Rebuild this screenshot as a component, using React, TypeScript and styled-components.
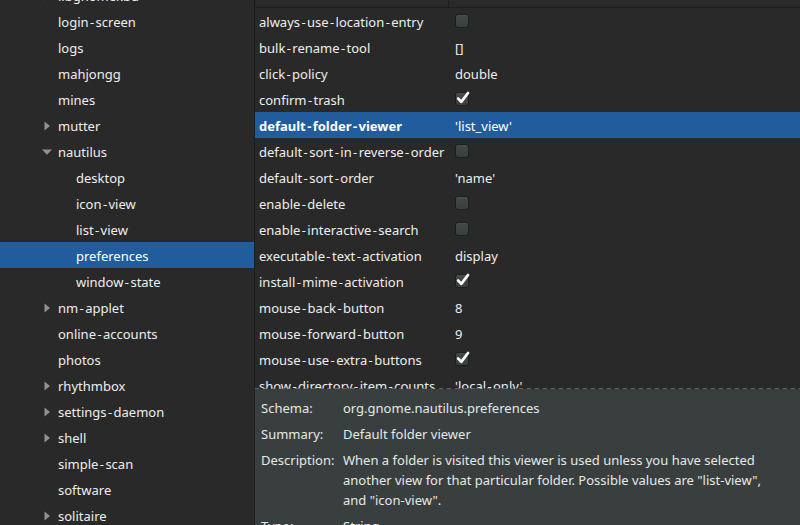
import React from "react";
import styled, { createGlobalStyle } from "styled-components";

const Global = createGlobalStyle`
  html, body { margin: 0; padding: 0; background: #292929; overflow: hidden; }
  body { font-family: "Noto Sans", "Open Sans", sans-serif; font-size: 13px; color: #eeeeec; }
`;

const Window = styled.div`
  display: flex;
  width: 800px;
  height: 525px;
  overflow: hidden;
  background: #292929;
`;

const Sidebar = styled.div`
  width: 254px;
  flex: none;
  border-right: 1px solid #1c1f1f;
  overflow: hidden;
`;

const SideScroll = styled.div`
  display: flex;
  flex-direction: column;
  margin-top: -18px;
`;

const SideRow = styled.div<{ $level: number; $selected?: boolean }>`
  display: flex;
  align-items: center;
  box-sizing: border-box;
  height: 26px;
  padding-top: 2px;
  padding-left: ${(p) => 40 + p.$level * 18}px;
  background: ${(p) => (p.$selected ? "#215d9c" : "transparent")};
  color: ${(p) => (p.$selected ? "#ffffff" : "#eeeeec")};
  white-space: nowrap;
`;

const Expander = styled.span`
  display: inline-flex;
  align-items: center;
  justify-content: center;
  width: 14px;
  height: 22px;
  margin-right: 4px;
  margin-top: -1px;
`;

const Main = styled.div`
  flex: 1;
  display: flex;
  flex-direction: column;
  min-width: 0;
`;

const ListArea = styled.div`
  position: relative;
  height: 389px;
  flex: none;
  overflow: hidden;
  &::after {
    content: "";
    position: absolute;
    left: 0;
    right: 0;
    bottom: 0;
    height: 1px;
    background: repeating-linear-gradient(90deg, #8a8a8a 0 4px, #292929 4px 8px);
    opacity: 0.6;
  }
`;

const Header = styled.div`
  display: grid;
  grid-template-columns: 194px 1fr;
  height: 7px;
  border-bottom: 1px solid #1c1f1f;
`;

const HeaderCell = styled.div<{ $divider?: boolean }>`
  border-right: ${(p) => (p.$divider ? "1px solid #1c1f1f" : "none")};
`;

const KeyRow = styled.div<{ $selected?: boolean }>`
  display: grid;
  grid-template-columns: 194px 1fr;
  align-items: center;
  box-sizing: border-box;
  height: 26px;
  padding-top: 2px;
  background: ${(p) => (p.$selected ? "#215d9c" : "transparent")};
  color: ${(p) => (p.$selected ? "#ffffff" : "#eeeeec")};
`;

const KeyName = styled.div<{ $bold?: boolean }>`
  padding-left: 4px;
  white-space: nowrap;
  overflow: hidden;
  font-weight: ${(p) => (p.$bold ? 700 : 400)};
`;

const KeyValue = styled.div`
  padding-left: 6px;
  white-space: nowrap;
  display: flex;
  align-items: center;
`;

const Hyphen = styled.span`
  padding: 0 1.4px;
`;

const CheckBox = styled.span`
  display: inline-flex;
  align-items: center;
  justify-content: center;
  width: 12px;
  height: 12px;
  margin-top: -2px;
  border: 1px solid #1c1f1f;
  border-radius: 3px;
  background: linear-gradient(#434848, #3a3e3e);
  box-shadow: inset 0 1px rgba(255, 255, 255, 0.04);
  position: relative;
`;

const CheckMark = styled.svg`
  position: absolute;
  left: 0;
  top: -3px;
  overflow: visible;
`;

const Details = styled.div`
  flex: 1;
  background: #393f3f;
  padding-top: 6px;
  display: grid;
  grid-template-columns: 88px 1fr;
  align-content: start;
  overflow: hidden;
`;

const DLabel = styled.div`
  padding: 3px 0 3px 6px;
  line-height: 20px;
  color: #e6e8e6;
  white-space: nowrap;
`;

const DValue = styled.div`
  padding: 3px 0;
  line-height: 20px;
  color: #e6e8e6;
`;

const Line = styled.span`
  display: block;
  white-space: nowrap;
`;

const Name = ({ text }: { text: string }) => {
  const parts = text.split("-");
  return (
    <>
      {parts.map((p, i) => (
        <React.Fragment key={i}>
          {i > 0 && <Hyphen>-</Hyphen>}
          {p}
        </React.Fragment>
      ))}
    </>
  );
};

const RightTri = () => (
  <svg width="7" height="10" viewBox="0 0 7 10">
    <polygon points="0.5,0.5 6,5 0.5,9.5" fill="#8f9292" />
  </svg>
);
const DownTri = () => (
  <svg width="10" height="6" viewBox="0 0 10 6">
    <polygon points="0,0.5 10,0.5 5,5.8" fill="#8f9292" />
  </svg>
);

const Check = ({ on }: { on: boolean }) => (
  <CheckBox>
    {on && (
      <CheckMark width="14" height="15" viewBox="0 0 14 15">
        <path d="M2.2 8.6 L5.3 11.8 L12 3" stroke="#f8f8f8" strokeWidth="2.8" fill="none" strokeLinecap="round" strokeLinejoin="round" />
      </CheckMark>
    )}
  </CheckBox>
);

type Side = { name: string; level: number; exp?: "r" | "d"; sel?: boolean };
const side: Side[] = [
  { name: "libgnomekbd", level: 0, exp: "r" },
  { name: "login-screen", level: 0 },
  { name: "logs", level: 0 },
  { name: "mahjongg", level: 0 },
  { name: "mines", level: 0 },
  { name: "mutter", level: 0, exp: "r" },
  { name: "nautilus", level: 0, exp: "d" },
  { name: "desktop", level: 1 },
  { name: "icon-view", level: 1 },
  { name: "list-view", level: 1 },
  { name: "preferences", level: 1, sel: true },
  { name: "window-state", level: 1 },
  { name: "nm-applet", level: 0, exp: "r" },
  { name: "online-accounts", level: 0 },
  { name: "photos", level: 0 },
  { name: "rhythmbox", level: 0, exp: "r" },
  { name: "settings-daemon", level: 0, exp: "r" },
  { name: "shell", level: 0, exp: "r" },
  { name: "simple-scan", level: 0 },
  { name: "software", level: 0 },
  { name: "solitaire", level: 0, exp: "r" },
];

type Key = { name: string; value: string | boolean; sel?: boolean };
const keys: Key[] = [
  { name: "always-use-location-entry", value: false },
  { name: "bulk-rename-tool", value: "[]" },
  { name: "click-policy", value: "double" },
  { name: "confirm-trash", value: true },
  { name: "default-folder-viewer", value: "'list_view'", sel: true },
  { name: "default-sort-in-reverse-order", value: false },
  { name: "default-sort-order", value: "'name'" },
  { name: "enable-delete", value: false },
  { name: "enable-interactive-search", value: false },
  { name: "executable-text-activation", value: "display" },
  { name: "install-mime-activation", value: true },
  { name: "mouse-back-button", value: "8" },
  { name: "mouse-forward-button", value: "9" },
  { name: "mouse-use-extra-buttons", value: true },
  { name: "show-directory-item-counts", value: "'local-only'" },
];

export default function App() {
  return (
    <>
      <Global />
      <Window>
        <Sidebar>
          <SideScroll>
            {side.map((s) => (
              <SideRow key={s.name} $level={s.level} $selected={s.sel}>
                <Expander>{s.exp === "r" ? <RightTri /> : s.exp === "d" ? <DownTri /> : null}</Expander>
                <Name text={s.name} />
              </SideRow>
            ))}
          </SideScroll>
        </Sidebar>
        <Main>
          <ListArea>
            <Header>
              <HeaderCell $divider />
              <HeaderCell />
            </Header>
            {keys.map((k) => (
              <KeyRow key={k.name} $selected={k.sel}>
                <KeyName $bold={k.sel}>
                  <Name text={k.name} />
                </KeyName>
                <KeyValue>
                  {typeof k.value === "boolean" ? <Check on={k.value} /> : <Name text={k.value} />}
                </KeyValue>
              </KeyRow>
            ))}
          </ListArea>
          <Details>
            <DLabel>Schema:</DLabel>
            <DValue>org.gnome.nautilus.preferences</DValue>
            <DLabel>Summary:</DLabel>
            <DValue>Default folder viewer</DValue>
            <DLabel>Description:</DLabel>
            <DValue>
              <Line>When a folder is visited this viewer is used unless you have selected</Line>
              <Line>another view for that particular folder. Possible values are "list-view",</Line>
              <Line>and "icon-view".</Line>
            </DValue>
            <DLabel>Type:</DLabel>
            <DValue>String</DValue>
          </Details>
        </Main>
      </Window>
    </>
  );
}
